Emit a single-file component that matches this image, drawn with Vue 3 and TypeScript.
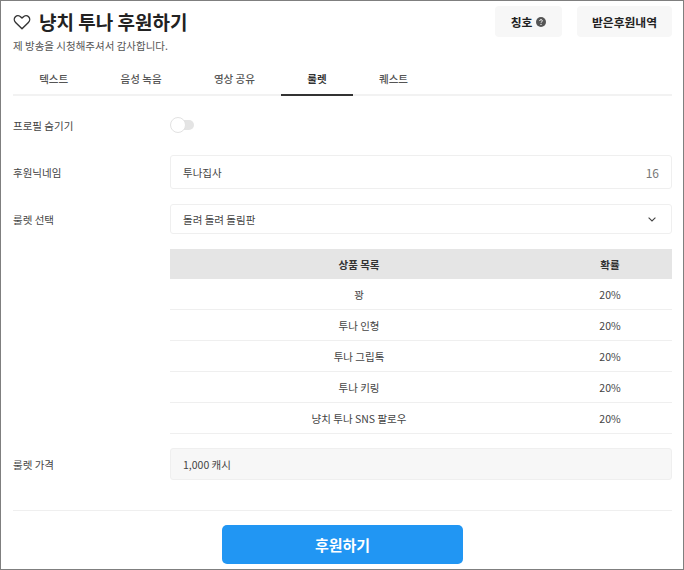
<script setup lang="ts">
const tabs: string[] = ['텍스트', '음성 녹음', '영상 공유', '룰렛', '퀘스트']
const activeTab = '룰렛'
const prizes: { name: string; rate: string }[] = [
  { name: '꽝', rate: '20%' },
  { name: '투나 인형', rate: '20%' },
  { name: '투나 그립톡', rate: '20%' },
  { name: '투나 키링', rate: '20%' },
  { name: '냥치 투나 SNS 팔로우', rate: '20%' },
]
</script>

<template>
  <div class="page">
    <header class="head">
      <div class="head-text">
        <h1 class="title">
          <svg class="heart" width="18" height="16" viewBox="0 0 18 16" fill="none">
            <path d="M9 14.7 2.6 8.4C.9 6.7.9 4.2 2.4 2.7c1.5-1.4 3.9-1.3 5.4.2L9 4.1l1.2-1.2c1.5-1.5 3.9-1.6 5.4-.2 1.5 1.5 1.5 4-.2 5.7L9 14.7Z" stroke="#333" stroke-width="1.4" stroke-linejoin="round" />
          </svg>
          냥치 투나 후원하기
        </h1>
        <p class="sub">제 방송을 시청해주셔서 감사합니다.</p>
      </div>
      <div class="head-btns">
        <button class="ghost ghost-title">
          칭호
          <svg width="10" height="10" viewBox="0 0 10 10">
            <circle cx="5" cy="5" r="5" fill="#555" />
            <path d="M3.6 3.9c0-.8.6-1.3 1.4-1.3s1.4.5 1.4 1.2c0 1-1.4 1-1.4 2" fill="none" stroke="#fff" stroke-width=".9" />
            <circle cx="5" cy="7.4" r=".6" fill="#fff" />
          </svg>
        </button>
        <button class="ghost ghost-history">받은후원내역</button>
      </div>
    </header>

    <nav class="tabs">
      <div v-for="t in tabs" :key="t" class="tab" :class="{ active: t === activeTab }">{{ t }}</div>
    </nav>

    <div class="form">
      <div class="row row-toggle">
        <div class="label">프로필 숨기기</div>
        <div class="toggle"><span class="knob"></span></div>
      </div>

      <div class="row row-nick">
        <div class="label">후원닉네임</div>
        <div class="field field-nick">
          <span>투나집사</span>
          <span class="count">16</span>
        </div>
      </div>

      <div class="row row-select">
        <div class="label">룰렛 선택</div>
        <div class="field field-select">
          <span>돌려 돌려 돌림판</span>
          <svg class="chev" width="8" height="5" viewBox="0 0 8 5" fill="none">
            <path d="M.6.7 4 4 7.4.7" stroke="#444" stroke-width="1.1" />
          </svg>
        </div>
      </div>

      <div class="row row-table">
        <div class="label"></div>
        <table class="prizes">
          <thead>
            <tr>
              <th class="col-name">상품 목록</th>
              <th class="col-rate">확률</th>
            </tr>
          </thead>
          <tbody>
            <tr v-for="p in prizes" :key="p.name">
              <td>{{ p.name }}</td>
              <td>{{ p.rate }}</td>
            </tr>
          </tbody>
        </table>
      </div>

      <div class="row row-price">
        <div class="label">룰렛 가격</div>
        <div class="field field-price">1,000 캐시</div>
      </div>
    </div>

    <footer class="foot">
      <button class="submit">후원하기</button>
    </footer>
  </div>
</template>

<style>
html, body { margin: 0; background: #fff; }
</style>

<style scoped>
.page {
  box-sizing: border-box;
  width: 684px;
  height: 570px;
  border: 1px solid #7f7f7f;
  padding: 0 11px 0 12px;
  overflow: hidden;
  background: #fff;
  color: #333;
  font-family: "Noto Sans CJK KR", "Noto Sans", sans-serif;
  font-size: 10.5px;
}
.head { display: flex; justify-content: space-between; align-items: flex-start; padding-top: 5px; }
.head-text { padding-top: 2px; }
.title {
  margin: 0;
  display: flex;
  align-items: center;
  gap: 8px;
  font-size: 19px;
  line-height: 28px;
  font-weight: 700;
  color: #222;
}
.sub { margin: 2px 0 0; font-size: 10.5px; line-height: 16px; color: #555; }
.head-btns { display: flex; gap: 15px; }
.ghost {
  height: 31px;
  border: 0;
  border-radius: 4px;
  background: #f7f7f7;
  color: #222;
  font: 600 11.8px "Noto Sans CJK KR", sans-serif;
  display: flex;
  align-items: center;
  justify-content: center;
  gap: 4px;
  padding: 0;
}
.ghost-title { width: 67px; }
.ghost-history { width: 95px; }
.tabs {
  display: flex;
  margin-top: 12px;
  height: 30px;
  box-sizing: border-box;
  border-bottom: 2px solid #f2f2f2;
}
.tab {
  padding: 0 26.2px;
  height: 30px;
  box-sizing: border-box;
  line-height: 26px;
  font-weight: 500;
  color: #555;
}
.tab.active { color: #333; border-bottom: 2px solid #333; font-weight: 700; }
.row { display: flex; align-items: center; }
.label { width: 157px; flex: none; color: #444; font-weight: 400; }
.row-toggle { margin-top: 21px; height: 16px; }
.toggle { position: relative; width: 24px; height: 16px; }
.toggle::before {
  content: "";
  position: absolute;
  left: 5px; right: 0; top: 3px; bottom: 3px;
  border-radius: 5px;
  background: #e4e4e4;
}
.knob {
  position: absolute;
  left: 0; top: 0;
  box-sizing: border-box;
  width: 16px; height: 16px;
  border-radius: 50%;
  background: #fff;
  border: 1px solid #e2e2e2;
}
.field {
  flex: 1;
  box-sizing: border-box;
  display: flex;
  align-items: center;
  justify-content: space-between;
  padding: 0 12px;
  border: 1px solid #efefef;
  border-radius: 3px;
  color: #444;
}
.row-nick { margin-top: 22px; }
.field-nick { height: 34px; }
.count { color: #777; font-size: 12px; }
.row-select { margin-top: 15px; }
.field-select { height: 30px; }
.chev { margin-right: 3px; }
.row-table { margin-top: 15px; }
.prizes { flex: 1; border-collapse: collapse; table-layout: fixed; color: #444; }
.prizes th { background: #e5e5e5; height: 30px; padding: 0; font-weight: 700; color: #333; }
.col-rate { width: 124px; }
.prizes td { height: 30px; padding: 0; text-align: center; border-bottom: 1px solid #efefef; font-size: 10.5px; }
.row-price { margin-top: 14px; }
.field-price { height: 32px; background: #f7f7f7; justify-content: flex-start; }
.foot {
  margin-top: 30px;
  border-top: 1px solid #efefef;
  padding-top: 14px;
  display: flex;
  justify-content: center;
}
.submit {
  width: 241px;
  height: 39px;
  border: 0;
  border-radius: 5px;
  background: #2196f3;
  color: #fff;
  font: 700 15px "Noto Sans CJK KR", sans-serif;
  padding: 0;
}
</style>
